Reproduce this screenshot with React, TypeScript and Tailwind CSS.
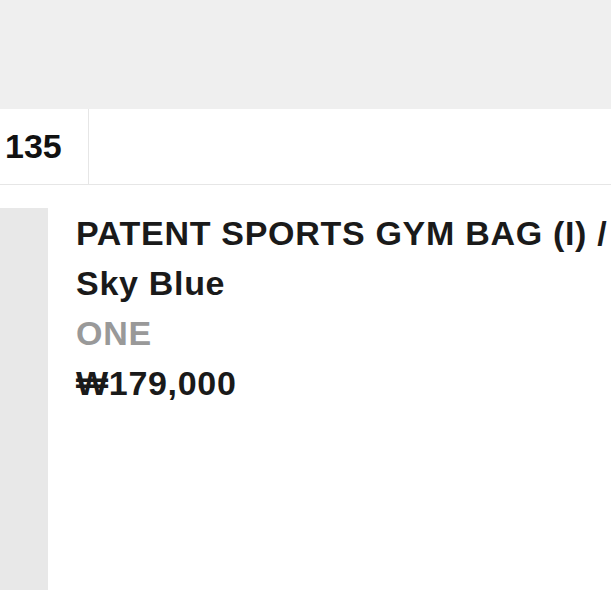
import React from 'react';

const item = {
  name: 'PATENT SPORTS GYM BAG (I) /',
  color: 'Sky Blue',
  size: 'ONE',
  price: '₩179,000',
};

const App: React.FC = () => {
  return (
    <div
      className="w-[611px] h-[611px] overflow-hidden bg-white"
      style={{ fontFamily: '"Liberation Sans", Arial, sans-serif' }}
    >
      {/* top bar */}
      <div className="h-[109px] bg-[#efefef]" />

      {/* count row */}
      <div className="flex h-[76px] border-b border-[#e6e6e6]">
        <div className="w-[89px] flex items-center pl-[5px] border-r border-[#e6e6e6]">
          <span className="text-[34px] font-bold text-[#111]">135</span>
        </div>
        <div className="flex-1" />
      </div>

      {/* cart item */}
      <div className="flex pt-[23px]">
        <div className="w-[48px] h-[382px] bg-[#e8e8e8] shrink-0" />
        <div className="ml-[28px] whitespace-nowrap text-[34px] leading-[50px] tracking-[0.7px] font-bold">
          <div className="text-[#1a1a1a]">{item.name}</div>
          <div className="text-[#1a1a1a]">{item.color}</div>
          <div className="text-[#999]">{item.size}</div>
          <div className="text-[#1a1a1a]">{item.price}</div>
        </div>
      </div>
    </div>
  );
};

export default App;
